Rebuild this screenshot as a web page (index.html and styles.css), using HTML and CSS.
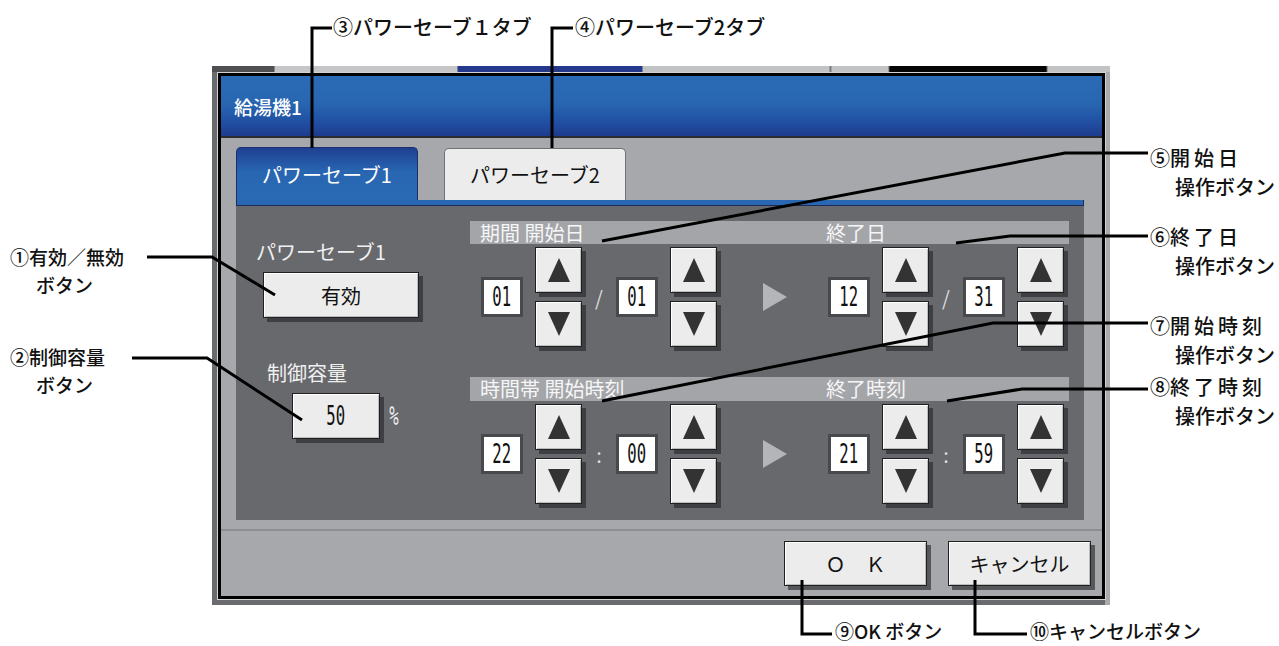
FILE: index.html
```html
<!DOCTYPE html>
<html lang="ja">
<head>
  <meta charset="utf-8">
  <title>パワーセーブ設定</title>
  <link rel="stylesheet" href="styles.css">
</head>
<body>
  <div class="figure">
    <div class="shot">
      <div class="dialog">
        <div class="titlebar">給湯機1</div>
        <div class="dlg-body">
          <div class="tabs">
            <div class="tab active">パワーセーブ1</div>
            <div class="tab">パワーセーブ2</div>
          </div>
          <div class="band"></div>
          <div class="panel">
            <div class="left">
              <div class="lbl">パワーセーブ1</div>
              <div class="btn btn-wide">有効</div>
              <div class="lbl lbl-cap">制御容量</div>
              <div class="cap-row">
                <div class="btn btn-cap"><span class="num">50</span></div>
                <span class="num pct">%</span>
              </div>
            </div>
            <div class="right">
              <div class="head"><span class="head-a">期間 開始日</span><span>終了日</span></div>
              <div class="row">
                <div class="val"><span class="num">01</span></div>
                <div class="stepper">
                  <div class="btn step"><svg width="22" height="24" viewBox="0 0 22 24"><polygon points="11,0 22,24 0,24"/></svg></div>
                  <div class="btn step"><svg width="22" height="24" viewBox="0 0 22 24"><polygon points="0,0 22,0 11,24"/></svg></div>
                </div>
                <div class="sep">/</div>
                <div class="val"><span class="num">01</span></div>
                <div class="stepper">
                  <div class="btn step"><svg width="22" height="24" viewBox="0 0 22 24"><polygon points="11,0 22,24 0,24"/></svg></div>
                  <div class="btn step"><svg width="22" height="24" viewBox="0 0 22 24"><polygon points="0,0 22,0 11,24"/></svg></div>
                </div>
                <div class="go"><svg width="24" height="28" viewBox="0 0 24 28"><polygon points="0,0 24,14 0,28"/></svg></div>
                <div class="val"><span class="num">12</span></div>
                <div class="stepper">
                  <div class="btn step"><svg width="22" height="24" viewBox="0 0 22 24"><polygon points="11,0 22,24 0,24"/></svg></div>
                  <div class="btn step"><svg width="22" height="24" viewBox="0 0 22 24"><polygon points="0,0 22,0 11,24"/></svg></div>
                </div>
                <div class="sep">/</div>
                <div class="val"><span class="num">31</span></div>
                <div class="stepper">
                  <div class="btn step"><svg width="22" height="24" viewBox="0 0 22 24"><polygon points="11,0 22,24 0,24"/></svg></div>
                  <div class="btn step"><svg width="22" height="24" viewBox="0 0 22 24"><polygon points="0,0 22,0 11,24"/></svg></div>
                </div>
              </div>
              <div class="head head2"><span class="head-a">時間帯 開始時刻</span><span>終了時刻</span></div>
              <div class="row">
                <div class="val"><span class="num">22</span></div>
                <div class="stepper">
                  <div class="btn step"><svg width="22" height="24" viewBox="0 0 22 24"><polygon points="11,0 22,24 0,24"/></svg></div>
                  <div class="btn step"><svg width="22" height="24" viewBox="0 0 22 24"><polygon points="0,0 22,0 11,24"/></svg></div>
                </div>
                <div class="sep">:</div>
                <div class="val"><span class="num">00</span></div>
                <div class="stepper">
                  <div class="btn step"><svg width="22" height="24" viewBox="0 0 22 24"><polygon points="11,0 22,24 0,24"/></svg></div>
                  <div class="btn step"><svg width="22" height="24" viewBox="0 0 22 24"><polygon points="0,0 22,0 11,24"/></svg></div>
                </div>
                <div class="go"><svg width="24" height="28" viewBox="0 0 24 28"><polygon points="0,0 24,14 0,28"/></svg></div>
                <div class="val"><span class="num">21</span></div>
                <div class="stepper">
                  <div class="btn step"><svg width="22" height="24" viewBox="0 0 22 24"><polygon points="11,0 22,24 0,24"/></svg></div>
                  <div class="btn step"><svg width="22" height="24" viewBox="0 0 22 24"><polygon points="0,0 22,0 11,24"/></svg></div>
                </div>
                <div class="sep">:</div>
                <div class="val"><span class="num">59</span></div>
                <div class="stepper">
                  <div class="btn step"><svg width="22" height="24" viewBox="0 0 22 24"><polygon points="11,0 22,24 0,24"/></svg></div>
                  <div class="btn step"><svg width="22" height="24" viewBox="0 0 22 24"><polygon points="0,0 22,0 11,24"/></svg></div>
                </div>
              </div>
            </div>
          </div>
        </div>
        <div class="dlg-foot">
          <div class="btn btn-foot">Ｏ　Ｋ</div>
          <div class="btn btn-foot">キャンセル</div>
        </div>
      </div>
    </div>

    <!-- leader lines of the callouts -->
    <svg class="leaders" width="1279" height="646" viewBox="0 0 1279 646">
      <g fill="none" stroke="#000" stroke-width="3">
        <polyline points="332,28 312,28 312,148"/>
        <polyline points="573,28 552,28 552,148"/>
        <polyline points="147,257 212,257 275,295"/>
        <polyline points="132,358 207,358 302,420"/>
        <polyline points="1148,153 1065,153 602,241"/>
        <polyline points="1148,236 1010,236 956,243"/>
        <polyline points="1148,323 993,323 602,401"/>
        <polyline points="1148,389 1022,389 947,401"/>
        <polyline points="802,580 802,634 832,634"/>
        <polyline points="975,580 975,634 1027,634"/>
      </g>
    </svg>

    <div class="note n3">③パワーセーブ１タブ</div>
    <div class="note n4">④パワーセーブ2タブ</div>
    <div class="note side n1">①有効／無効<span class="sub">ボタン</span></div>
    <div class="note side n2">②制御容量<span class="sub">ボタン</span></div>
    <div class="note op n5">⑤<span class="sp">開始日</span><span class="sub">操作ボタン</span></div>
    <div class="note op n6">⑥<span class="sp">終了日</span><span class="sub">操作ボタン</span></div>
    <div class="note op n7">⑦<span class="sp">開始時刻</span><span class="sub">操作ボタン</span></div>
    <div class="note op n8">⑧<span class="sp">終了時刻</span><span class="sub">操作ボタン</span></div>
    <div class="note foot n9">⑨OK ボタン</div>
    <div class="note foot n10">⑩キャンセルボタン</div>
  </div>
</body>
</html>
```

FILE: styles.css
```css
* { box-sizing: border-box; }

body {
  margin: 0;
  background: #fff;
  font-family: "Noto Sans CJK JP", sans-serif;
  color: #111;
}

.figure {
  position: relative;
  width: 1279px;
  height: 646px;
  overflow: hidden;
}

/* the screen behind the dialog */
.shot {
  width: 898px;
  height: 539px;
  margin: 66px 0 0 212px;
  padding: 7px 0 0 6px;
  background:
    linear-gradient(to right, #4f4f52 0 62px, #c6c6c8 63px 245px, #24398c 246px 430px,
      #c2c3c5 431px 617px, #7b7b7e 618px 619px, #c2c3c5 620px 676px,
      #050505 678px 834px, #c2c3c5 836px) top / 100% 6px no-repeat,
    linear-gradient(#a9aaae, #a9aaae) right top / 5px 100% no-repeat,
    #6a6b6f;
}

.dialog {
  width: 887px;
  height: 526px;
  border: 3px solid #000;
  outline: 1px solid #d2d2d4;
  background: #a7a8ac;
  display: flex;
  flex-direction: column;
}

.titlebar {
  height: 62px;
  border-bottom: 2px solid #2b2b30;
  padding-left: 13px;
  display: flex;
  align-items: center;
  color: #fff;
  font-size: 19px;
  font-weight: 500;
  background: linear-gradient(#2b6bb5, #2866b1 45%, #2151a4 75%, #1f3b8e);
}

.dlg-body { padding: 9px 18px 0 15px; }

.tabs {
  display: flex;
  align-items: flex-end;
  height: 53px;
}
.tab {
  width: 182px;
  height: 52px;
  margin-right: 26px;
  border: 1px solid #707175;
  border-bottom: 0;
  border-radius: 5px 5px 0 0;
  background: #ececec;
  font-size: 20px;
  display: flex;
  align-items: center;
  justify-content: center;
}
.tab.active {
  height: 53px;
  color: #fff;
  border-color: #1b2f6e;
  background: linear-gradient(#1f3f92, #2866b1 45%, #2a69b4);
}

.band {
  height: 6px;
  background: #2967b2;
  border: 1px solid #1d2b5a;
  border-top: 0;
}

.panel {
  height: 314px;
  background: #68696d;
  display: flex;
}

.left {
  width: 234px;
  display: flex;
  flex-direction: column;
  align-items: flex-start;
}
.lbl {
  color: #f0f0f0;
  font-size: 20px;
  line-height: 22px;
  margin: 35px 0 0 20px;
}
.lbl-cap { margin: 44px 0 0 31px; }
.btn-wide {
  width: 156px;
  height: 46px;
  margin: 9px 0 0 27px;
}
.cap-row {
  display: flex;
  align-items: center;
  margin: 9px 0 0 56px;
}
.btn-cap { width: 88px; height: 46px; }
.pct { margin-left: 6px; color: #eee; }

.right { width: 599px; }

.head {
  margin-top: 15px;
  height: 23px;
  padding-left: 10px;
  background: #a4a5a9;
  color: #f6f6f6;
  font-size: 20px;
  line-height: 23px;
  display: flex;
}
.head2 { margin-top: 30px; height: 24px; line-height: 24px; }
.head-a { width: 346px; }

.row {
  display: flex;
  align-items: center;
  height: 100px;
  margin-top: 3px;
  padding-left: 11px;
}

.val {
  width: 42px;
  height: 40px;
  border: 3px solid #48494d;
  background: #fff;
  display: flex;
  align-items: center;
  justify-content: center;
}
.num {
  display: inline-block;
  font-family: "DejaVu Sans Mono", monospace;
  font-size: 26px;
  line-height: 1;
  transform: scaleX(0.6);
}

.stepper {
  display: flex;
  flex-direction: column;
  gap: 8px;
  margin-left: 12px;
}
.step { width: 47px; height: 46px; }
.step svg { fill: #333; }

.sep {
  width: 34px;
  text-align: center;
  color: #dcdcdc;
  font-size: 20px;
}
.go {
  display: flex;
  margin: 0 41px 0 46px;
}
.go svg { fill: #b4b5b9; }

.btn {
  background: #ececec;
  border: 1px solid #202020;
  box-shadow: inset 1px 1px 0 #fff, inset -1px -1px 0 #bdbdbd, 4px 4px 0 #3e3f43;
  display: flex;
  align-items: center;
  justify-content: center;
  font-size: 20px;
  color: #111;
}

.dlg-foot {
  flex: 1;
  margin-top: 9px;
  border-top: 2px solid #8d8e92;
  padding: 10px 11px 0 0;
  display: flex;
  justify-content: flex-end;
  align-items: flex-start;
  gap: 21px;
}
.btn-foot {
  width: 143px;
  height: 45px;
  box-shadow: inset 1px 1px 0 #fff, inset -1px -1px 0 #bdbdbd, 4px 4px 0 #56575b;
}

/* callouts */
.leaders {
  position: absolute;
  left: 0;
  top: 0;
}
.note {
  position: absolute;
  font-size: 20px;
  font-weight: 500;
  line-height: 28px;
  white-space: nowrap;
}
.sub { display: block; }
.side { font-size: 19px; line-height: 28px; }
.side .sub { padding-left: 26px; }
.op { line-height: 29px; }
.op .sub { padding-left: 25px; }
.sp { letter-spacing: 4px; }
.foot { font-size: 19px; line-height: 22px; }

.n3 { left: 333px; top: 13px; }
.n4 { left: 575px; top: 13px; }
.n1 { left: 10px; top: 243px; }
.n2 { left: 10px; top: 343px; }
.n5 { left: 1150px; top: 143px; }
.n6 { left: 1150px; top: 222px; }
.n7 { left: 1150px; top: 311px; }
.n8 { left: 1150px; top: 372px; }
.n9 { left: 835px; top: 620px; }
.n10 { left: 1030px; top: 620px; }
```
